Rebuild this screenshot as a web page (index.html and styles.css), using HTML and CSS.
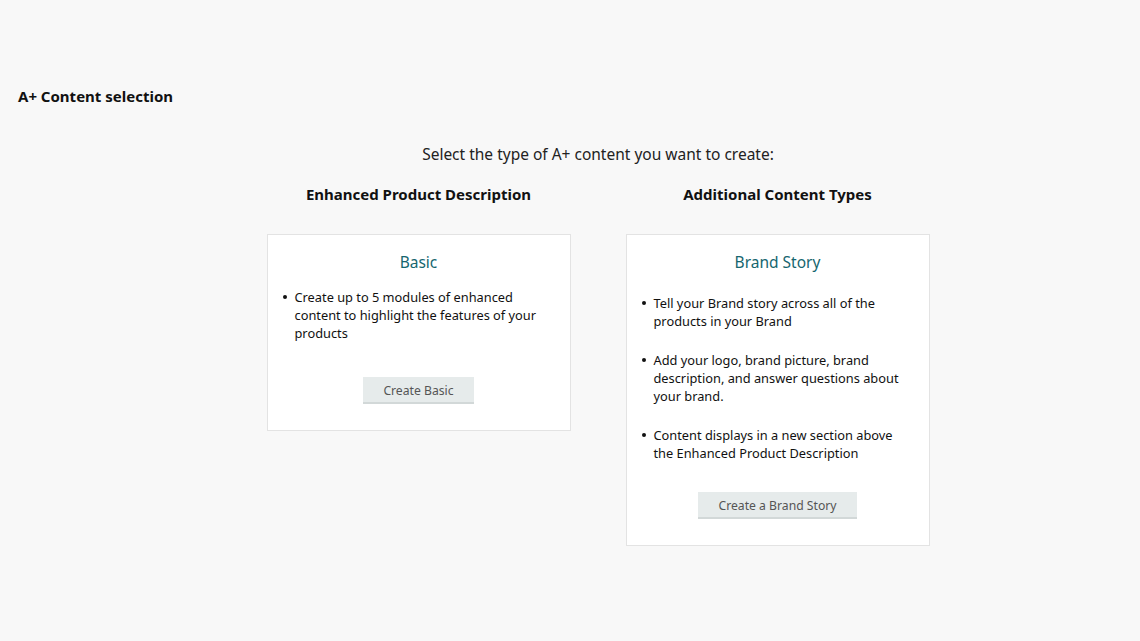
FILE: index.html
```html
<!DOCTYPE html>
<html lang="en">
<head>
<meta charset="utf-8">
<title>A+ Content selection</title>
<link rel="stylesheet" href="styles.css">
</head>
<body>
<header class="page-header">
  <h1 class="page-title">A+ Content selection</h1>
</header>
<main class="selection">
  <p class="prompt">Select the type of A+ content you want to create:</p>
  <div class="columns">
    <section class="column">
      <h2 class="column-title">Enhanced Product Description</h2>
      <div class="card">
        <h3 class="card-title">Basic</h3>
        <ul class="card-list">
          <li>Create up to 5 modules of enhanced content to highlight the features of your products</li>
        </ul>
        <button class="card-btn btn-basic">Create Basic</button>
      </div>
    </section>
    <section class="column">
      <h2 class="column-title">Additional Content Types</h2>
      <div class="card">
        <h3 class="card-title">Brand Story</h3>
        <ul class="card-list spaced">
          <li>Tell your Brand story across all of the products in your Brand</li>
          <li>Add your logo, brand picture, brand description, and answer questions about your brand.</li>
          <li>Content displays in a new section above the Enhanced Product Description</li>
        </ul>
        <button class="card-btn btn-brand">Create a Brand Story</button>
      </div>
    </section>
  </div>
</main>
</body>
</html>
```

FILE: styles.css
```css
* { box-sizing: border-box; }
html, body { margin: 0; padding: 0; }
body {
  background: #f8f8f8;
  font-family: "Noto Sans", "Open Sans", Arial, sans-serif;
  color: #111;
  width: 1140px;
  height: 641px;
  overflow: hidden;
}
.page-header {
  padding: 86px 18px 0;
}
.page-title {
  margin: 0;
  font-size: 15px;
  font-weight: 700;
  line-height: 20px;
  color: #111;
}
.selection {
  padding-left: 56px;
  display: flex;
  flex-direction: column;
  align-items: center;
}
.prompt {
  margin: 37px 0 0;
  font-size: 15.5px;
  line-height: 22px;
  color: #222;
}
.columns {
  display: flex;
  gap: 55px;
  margin-top: 18px;
}
.column {
  width: 304px;
  display: flex;
  flex-direction: column;
  align-items: stretch;
}
.column-title {
  margin: 0;
  text-align: center;
  font-size: 15px;
  font-weight: 700;
  line-height: 22px;
  color: #111;
}
.card {
  margin-top: 29px;
  background: #fff;
  border: 1px solid #e3e3e3;
  padding: 16px 20px 26px 14px;
  display: flex;
  flex-direction: column;
  align-items: center;
}
.card-title {
  margin: 0;
  font-size: 15.5px;
  font-weight: 400;
  line-height: 22px;
  color: #16666f;
  padding-left: 6px;
}
.card-list {
  margin: 15px 0 0;
  padding: 0 0 0 13px;
  list-style: none;
  align-self: stretch;
  font-size: 12.8px;
  line-height: 18px;
  color: #111;
}
.card-list li {
  position: relative;
}
.card-list li::before {
  content: "";
  position: absolute;
  left: -12px;
  top: 7px;
  width: 4px;
  height: 4px;
  border-radius: 50%;
  background: #111;
}
.card-list.spaced {
  margin-top: 21px;
}
.card-list.spaced li + li {
  margin-top: 21px;
}
.card-btn {
  font-family: inherit;
  font-size: 12.2px;
  color: #555;
  background: #e6ebeb;
  border: none;
  border-bottom: 2px solid #d2d8d8;
  height: 27px;
  padding: 0 20px;
  padding-top: 1px;
  cursor: pointer;
  margin-left: 6px;
}
.btn-basic { margin-top: 35px; }
.btn-brand { margin-top: 30px; }
```
